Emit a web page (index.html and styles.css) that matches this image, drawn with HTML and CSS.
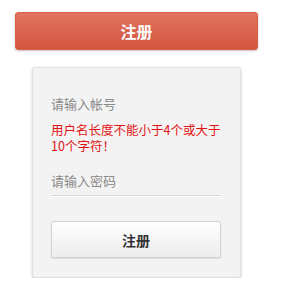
FILE: index.html
```html
<!DOCTYPE html>
<html lang="zh-CN">
<head>
<meta charset="utf-8">
<title>注册</title>
<link rel="stylesheet" href="styles.css">
</head>
<body>
<div class="page">
  <button class="top-btn" type="button">注册</button>
  <div class="card">
    <div class="field field-plain"><span class="ph">请输入帐号</span></div>
    <div class="error">用户名长度不能小于4个或大于10个字符！</div>
    <div class="field field-line"><span class="ph">请输入密码</span></div>
    <button class="submit-btn" type="button">注册</button>
  </div>
</div>
</body>
</html>
```

FILE: styles.css
```css
html, body {
  margin: 0;
  padding: 0;
  background: #ffffff;
}
body {
  font-family: "Noto Sans CJK SC", "Liberation Sans", sans-serif;
}
.page {
  display: flex;
  flex-direction: column;
  align-items: flex-start;
  padding-top: 12px;
}
.top-btn {
  margin-left: 15px;
  width: 243px;
  height: 38px;
  border: 1px solid #d8604b;
  border-radius: 3px;
  background: linear-gradient(to bottom, #e27560, #d3543f);
  color: #ffffff;
  font-family: inherit;
  font-size: 16px;
  font-weight: bold;
  padding: 0;
  box-shadow: 0 1px 2px rgba(0,0,0,0.25);
}
.card {
  margin-top: 17px;
  margin-left: 32px;
  width: 209px;
  box-sizing: border-box;
  background: #f3f3f3;
  border: 1px solid #e0e0e0;
  border-radius: 3px;
  box-shadow: 0 1px 3px rgba(0,0,0,0.2);
  padding: 20px 19px 19px 18px;
  display: flex;
  flex-direction: column;
}
.field {
  height: 30px;
  display: flex;
  align-items: center;
  font-size: 13px;
  color: #8a8a8a;
}
.field-line {
  margin-top: 11px;
  border-bottom: 1px solid #d9d9d9;
  box-shadow: 0 1px 0 #ffffff;
}
.error {
  margin-top: 4px;
  color: #e41212;
  font-size: 12.5px;
  line-height: 16px;
}
.submit-btn {
  margin-top: 25px;
  height: 37px;
  width: 100%;
  border: 1px solid #d2d2d2;
  border-radius: 2px;
  background: linear-gradient(to bottom, #ffffff, #ececec);
  color: #333333;
  font-family: inherit;
  font-size: 14px;
  font-weight: bold;
  padding: 0;
  box-shadow: 0 1px 1px rgba(0,0,0,0.08);
}
```
